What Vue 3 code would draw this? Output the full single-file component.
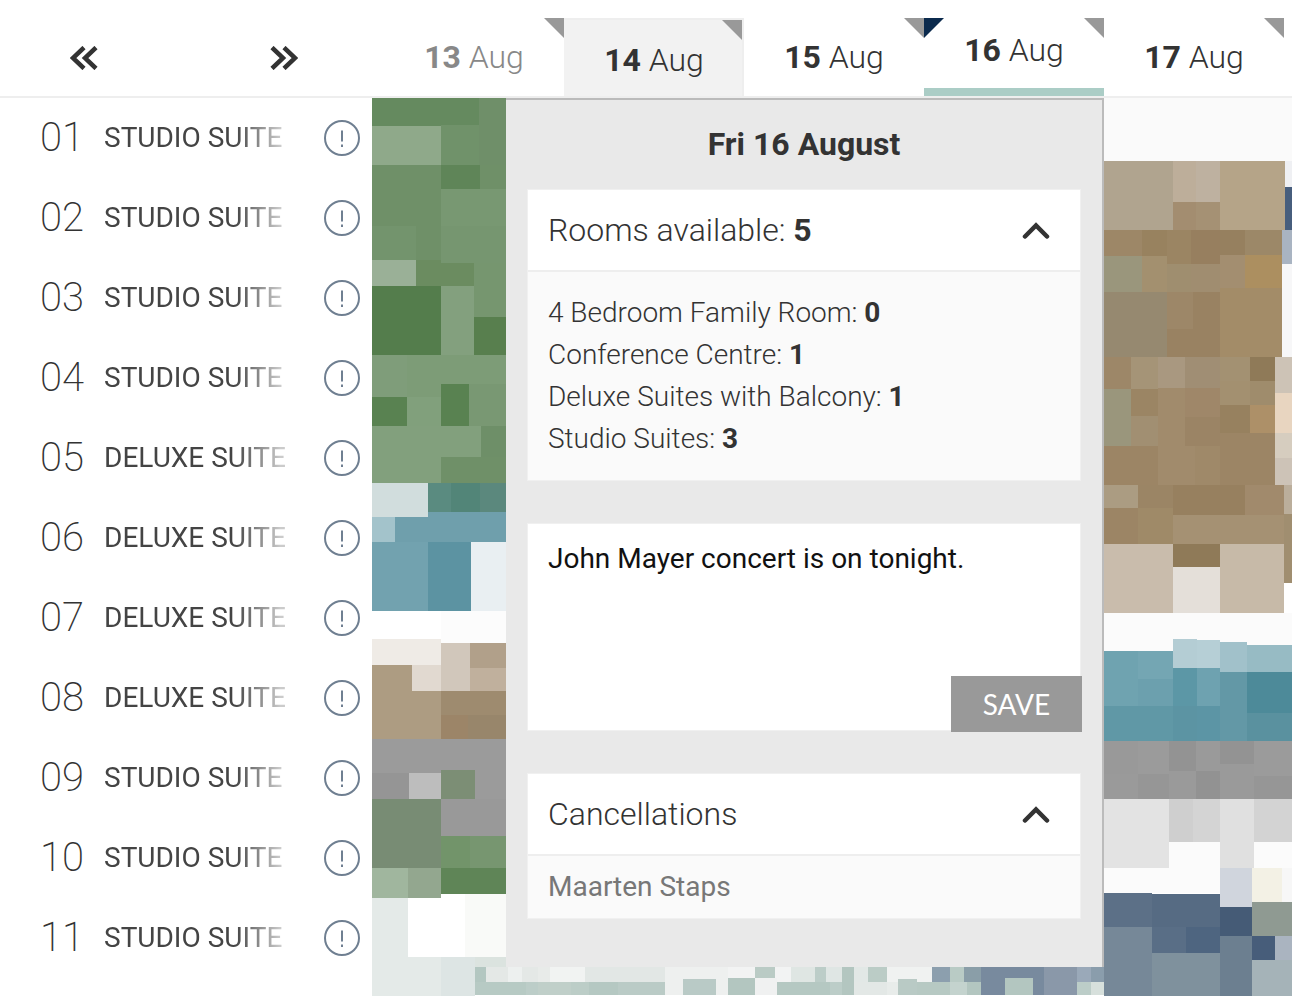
<script setup>
const days = [
  { num: 13, cls: 'past' },
  { num: 14, cls: 'today' },
  { num: 15, cls: '' },
  { num: 16, cls: 'active' },
  { num: 17, cls: '' }
]

const rooms = [
  ['01', 'STUDIO SUITE'], ['02', 'STUDIO SUITE'], ['03', 'STUDIO SUITE'], ['04', 'STUDIO SUITE'],
  ['05', 'DELUXE SUITE'], ['06', 'DELUXE SUITE'], ['07', 'DELUXE SUITE'], ['08', 'DELUXE SUITE'],
  ['09', 'STUDIO SUITE'], ['10', 'STUDIO SUITE'], ['11', 'STUDIO SUITE']
]

const availability = [
  ['4 Bedroom Family Room', 0],
  ['Conference Centre', 1],
  ['Deluxe Suites with Balcony', 1],
  ['Studio Suites', 3]
]

// blurred booking blocks: [x1, y1, x2, y2, colour] in page pixels
const blocks = [
  // left column
  [372,98,479,126,'#658a5f'],[479,98,506,165,'#6f8f69'],[372,126,441,165,'#8fa98a'],[441,125,479,165,'#70926a'],
  [372,165,441,226,'#6f9068'],[441,165,480,189,'#5f8558'],[480,165,506,189,'#6f9068'],[441,189,506,226,'#789872'],
  [372,226,416,260,'#73946d'],[416,226,441,260,'#6f9068'],[441,226,506,263,'#769670'],[372,260,416,286,'#9ab097'],
  [416,260,441,286,'#6b8c60'],[441,263,474,286,'#6b8c60'],[474,263,506,317,'#76966f'],[372,286,441,355,'#547d4c'],
  [441,286,474,355,'#83a07e'],[474,317,506,355,'#587f4e'],[372,355,407,397,'#7f9d7a'],[407,355,506,384,'#7d9c77'],
  [407,384,441,397,'#7d9c77'],[441,384,469,426,'#598251'],[469,384,506,426,'#799873'],[372,397,407,426,'#598251'],
  [407,397,441,426,'#81a07c'],[372,426,481,457,'#82a07d'],[481,426,506,457,'#6e8f68'],[372,457,441,483,'#82a07d'],
  [441,457,506,483,'#6f9068'],[372,483,428,517,'#d1dddd'],[428,483,451,512,'#5a8b80'],[451,483,480,512,'#528578'],
  [480,483,506,512,'#5b887d'],[428,512,506,542,'#6f9fac'],[372,517,395,542,'#a3c3cb'],[395,517,428,542,'#6f9fac'],
  [372,542,428,611,'#72a2af'],[428,542,471,611,'#5c93a2'],[471,542,506,611,'#e9eff2'],[441,611,506,643,'#fcfcfc'],
  [372,639,441,665,'#efebe6'],[372,665,412,691,'#ad9c82'],[412,665,441,691,'#e1d9d0'],[441,643,470,691,'#d1c7bb'],
  [470,643,506,668,'#b1a08a'],[470,668,506,691,'#c0b09d'],[372,691,441,739,'#ad9c82'],[441,691,506,715,'#9e8b6f'],
  [441,715,468,739,'#9c8568'],[468,715,506,739,'#98866b'],[372,739,506,773,'#9b9b9b'],[372,773,409,799,'#959595'],
  [409,773,441,799,'#bdbdbd'],[441,770,475,799,'#7c8e75'],[475,770,506,799,'#9b9b9b'],[372,799,441,868,'#788c74'],
  [441,799,506,836,'#999999'],[441,836,470,868,'#72946a'],[470,836,506,868,'#779670'],[372,868,408,898,'#a0b69e'],
  [408,868,441,898,'#93a78f'],[441,868,506,894,'#5f8557'],[372,898,408,957,'#e4eae8'],[465,894,506,957,'#f9faf8'],
  [372,957,441,996,'#e4eae8'],[441,957,475,996,'#dde5e4'],[475,957,506,967,'#dbe3df'],
  // strip under the panel, top row
  [475,967,486,982,'#b3c7c1'],[486,967,508,982,'#e4e8e6'],[508,967,522,982,'#edf0ef'],[522,967,538,982,'#e4e8e6'],
  [538,967,550,982,'#e8ebe9'],[550,967,585,982,'#f1f3f2'],[585,967,665,982,'#e2e7e5'],[665,967,728,982,'#eef0ef'],
  [728,967,755,982,'#f2f3f3'],[755,967,775,982,'#bacbc5'],[775,967,791,982,'#f2f3f3'],[791,967,815,982,'#dfe6e3'],
  [815,967,826,982,'#bccdc8'],[826,967,842,982,'#dfe6e4'],[842,967,854,982,'#b3c6c0'],[854,967,868,982,'#e2e8e6'],
  [868,967,887,982,'#bbccc6'],[887,967,932,982,'#f0f2f1'],[932,967,950,982,'#8c9fae'],[950,967,964,982,'#b9cbc5'],
  [964,967,981,982,'#8a9ea8'],[981,967,1044,982,'#788a9e'],[1044,967,1077,982,'#8a98a9'],[1077,967,1091,982,'#9aa9b9'],
  [1091,967,1107,982,'#8a9dac'],
  // strip, bottom row
  [475,982,526,995,'#b7cac4'],[526,982,538,995,'#bccdc8'],[538,982,571,995,'#c0cfc9'],[571,982,589,995,'#bccdc7'],
  [589,982,618,995,'#b5c8c2'],[618,982,665,995,'#bacbc6'],[665,982,683,995,'#eef0ef'],[683,979,716,995,'#b9cac6'],
  [716,982,728,995,'#eef0ef'],[728,978,755,995,'#b3c6c0'],[755,978,777,995,'#f0f1f1'],[777,982,830,995,'#b5c8c2'],
  [830,982,842,995,'#bccdc8'],[842,982,854,995,'#b3c6c0'],[854,982,887,995,'#e3e8e6'],[887,982,898,995,'#e8ecea'],
  [898,979,917,995,'#b9cac5'],[917,982,950,995,'#b7c9c3'],[950,982,967,995,'#c4d3ce'],[967,982,981,995,'#b3c6c0'],
  [981,982,1005,995,'#788a9e'],[1005,978,1033,995,'#b3c6c0'],[1033,982,1044,995,'#788a9e'],[1044,982,1077,995,'#8a98a9'],
  [1077,982,1091,995,'#bccdc8'],[1091,982,1107,995,'#d7e0dc'],
  // right column
  [1104,98,1292,161,'#fafafa'],[1104,161,1173,230,'#b0a48f'],[1173,161,1196,202,'#bdae9a'],[1196,161,1220,202,'#beb1a0'],
  [1173,202,1196,230,'#a38d70'],[1196,202,1220,230,'#a59174'],[1220,161,1285,230,'#b5a488'],[1285,161,1292,187,'#eff0f3'],
  [1285,187,1292,230,'#475e7d'],[1104,230,1142,256,'#9d8767'],[1142,230,1167,256,'#98825f'],[1167,230,1191,264,'#9b8563'],
  [1191,230,1220,264,'#977f5f'],[1220,230,1245,255,'#96805f'],[1245,230,1282,255,'#9c8868'],[1282,230,1292,264,'#a9b4c2'],
  [1104,256,1142,292,'#9a967c'],[1142,256,1167,292,'#a3906f'],[1167,264,1191,292,'#9f8e6f'],[1191,264,1220,292,'#a08d70'],
  [1220,255,1245,288,'#a38e70'],[1245,255,1282,288,'#ac8f60'],[1282,264,1292,357,'#f7f7f8'],[1104,292,1167,357,'#968970'],
  [1167,292,1193,329,'#9d8768'],[1193,292,1220,329,'#998262'],[1167,329,1220,357,'#998262'],[1220,288,1282,357,'#a38c68'],
  [1104,357,1131,389,'#9d8768'],[1131,357,1158,389,'#a59477'],[1158,357,1185,388,'#a99880'],[1185,357,1220,388,'#a08e74'],
  [1220,357,1250,381,'#a39172'],[1250,357,1275,381,'#8f7a58'],[1275,357,1292,393,'#cdc3b6'],[1104,389,1131,446,'#9a967c'],
  [1131,389,1158,416,'#9b8564'],[1131,416,1158,446,'#a18f72'],[1158,388,1185,446,'#a18b6c'],[1185,388,1220,417,'#9f8769'],
  [1185,417,1220,446,'#9b8465'],[1220,381,1250,405,'#a39070'],[1250,381,1275,405,'#9f8c6c'],[1220,405,1250,433,'#97815f'],
  [1250,405,1275,433,'#ad9068'],[1275,393,1292,433,'#e8d5c0'],[1275,433,1292,458,'#d6cdbf'],[1275,458,1292,485,'#cdc3b7'],
  [1104,446,1158,485,'#9c8565'],[1158,446,1195,485,'#a18b6c'],[1195,446,1220,485,'#9f8969'],[1220,433,1275,485,'#9c8565'],
  [1104,485,1138,508,'#ab9c82'],[1138,485,1173,508,'#9b8565'],[1173,485,1245,515,'#97805f'],[1245,485,1284,516,'#a18a6c'],
  [1284,485,1292,514,'#bbae9b'],[1104,508,1138,544,'#9c8565'],[1138,508,1173,544,'#9f8a68'],[1173,515,1284,544,'#a59173'],
  [1284,514,1292,583,'#a08e70'],[1104,544,1173,613,'#c9bcac'],[1173,544,1220,567,'#8f7a58'],[1173,567,1220,613,'#e4dfd9'],
  [1220,544,1284,613,'#c7baa8'],[1104,613,1292,651,'#fbfbfb'],
  [1104,651,1138,706,'#6fa3b0'],[1138,651,1173,679,'#74a6b3'],[1138,679,1173,706,'#6ca0ae'],[1173,639,1197,668,'#b4cdd4'],
  [1197,640,1220,668,'#b6cfd6'],[1220,642,1247,672,'#a1c1ca'],[1247,645,1292,672,'#97bbc4'],[1173,668,1197,706,'#5c97a6'],
  [1197,668,1220,706,'#6ea2b0'],[1220,672,1247,741,'#6398a6'],[1247,672,1292,713,'#4d8a99'],[1247,713,1292,741,'#5a919f'],
  [1104,706,1173,741,'#6098a6'],[1173,706,1197,741,'#5c94a3'],[1197,706,1220,741,'#5c95a5'],
  [1104,741,1138,774,'#999999'],[1138,741,1169,774,'#9b9b9b'],[1169,741,1196,771,'#939393'],[1196,741,1220,771,'#9a9a9a'],
  [1220,741,1254,764,'#939393'],[1254,741,1292,776,'#9b9b9b'],[1220,764,1254,799,'#9a9a9a'],[1254,776,1292,799,'#969696'],
  [1169,771,1196,799,'#9a9a9a'],[1196,771,1220,799,'#929292'],[1104,774,1138,799,'#9a9a9a'],[1138,774,1169,799,'#969696'],
  [1104,799,1169,868,'#e3e3e3'],[1169,799,1193,842,'#cfcfcf'],[1193,799,1220,842,'#d4d4d4'],[1220,799,1254,868,'#e0e0e0'],
  [1254,799,1292,842,'#d3d3d3'],[1169,842,1220,868,'#fbfbfb'],[1254,842,1292,868,'#fbfbfb'],[1104,868,1220,893,'#fbfbfb'],
  [1220,868,1252,907,'#d0d5dd'],[1252,868,1282,902,'#f3f1e5'],[1282,868,1292,902,'#f7f7f7'],[1104,893,1152,927,'#5c7087'],
  [1152,894,1220,927,'#566b83'],[1220,907,1252,936,'#455b76'],[1252,902,1292,936,'#8f9a92'],[1104,927,1152,996,'#768898'],
  [1152,927,1186,953,'#596e86'],[1186,927,1220,953,'#4e6580'],[1152,953,1220,996,'#7f919d'],[1220,936,1252,996,'#6c7f90'],
  [1252,936,1275,960,'#475d7a'],[1275,936,1292,960,'#aab4c0'],[1252,960,1292,996,'#a5b3b8']
]
</script>

<template>
  <div class="page">
    <header class="topbar">
      <div class="pager">
        <svg class="pager-icon" viewBox="0 0 28 24"><path d="M14 1.5 3 12l11 10.5M26 1.5 15 12l11 10.5" /></svg>
        <svg class="pager-icon" viewBox="0 0 28 24"><path d="M2 1.5 13 12 2 22.5M14 1.5 25 12 14 22.5" /></svg>
      </div>
      <div v-for="day in days" :key="day.num" class="day" :class="day.cls">
        <span v-if="day.cls === 'active'" class="flag"></span>
        <span class="corner"></span>
        <span><b>{{ day.num }}</b> Aug</span>
      </div>
    </header>

    <div class="board">
      <ul class="rooms">
        <li v-for="room in rooms" :key="room[0]" class="room">
          <span class="room-no">{{ room[0] }}</span>
          <span class="room-type">{{ room[1] }}</span>
          <svg class="alert" viewBox="0 0 36 36">
            <circle cx="18" cy="18" r="17" />
            <path d="M18 10.5v11M18 24.5v2.5" />
          </svg>
        </li>
      </ul>

      <div class="timeline">
        <svg class="blocks" viewBox="372 98 920 898" shape-rendering="crispEdges">
          <rect
            v-for="(b, i) in blocks"
            :key="i"
            :x="b[0]"
            :y="b[1]"
            :width="b[2] - b[0]"
            :height="b[3] - b[1]"
            :fill="b[4]"
          />
        </svg>

        <aside class="panel">
          <h2>Fri 16 August</h2>

          <section class="card">
            <div class="card-head">
              <span>Rooms available: <b>5</b></span>
              <svg class="chevron" viewBox="0 0 28 17"><path d="M3 14.5 14 3.5 25 14.5" /></svg>
            </div>
            <div class="card-body">
              <p v-for="item in availability" :key="item[0]">{{ item[0] }}: <b>{{ item[1] }}</b></p>
            </div>
          </section>

          <section class="card note">
            <p>John Mayer concert is on tonight.</p>
            <button type="button" class="save">SAVE</button>
          </section>

          <section class="card">
            <div class="card-head">
              <span>Cancellations</span>
              <svg class="chevron" viewBox="0 0 28 17"><path d="M3 14.5 14 3.5 25 14.5" /></svg>
            </div>
            <div class="card-body cancelled">
              <p>Maarten Staps</p>
            </div>
          </section>
        </aside>
      </div>
    </div>
  </div>
</template>

<style scoped>
.page {
  width: 1292px;
  height: 996px;
  overflow: hidden;
  background: #fff;
  color: #333;
  font-family: Roboto, "Liberation Sans", sans-serif;
}

.topbar {
  display: flex;
  height: 98px;
  box-sizing: border-box;
  border-bottom: 2px solid #eee;
}

.pager {
  width: 384px;
  box-sizing: border-box;
  display: flex;
  align-items: center;
  gap: 172px;
  padding: 20px 0 0 70px;
}

.pager-icon {
  width: 28px;
  height: 24px;
  flex: none;
}

.pager-icon path {
  fill: none;
  stroke: #333;
  stroke-width: 4.5;
}

.day {
  position: relative;
  width: 180px;
  height: 78px;
  margin-top: 18px;
  box-sizing: border-box;
  display: flex;
  align-items: center;
  justify-content: center;
  font-size: 32px;
  font-weight: 300;
}

.day b {
  font-weight: 700;
}

.corner {
  position: absolute;
  top: 0;
  right: 0;
  border-top: 20px solid #999;
  border-left: 20px solid transparent;
}

.flag {
  position: absolute;
  top: 0;
  left: 0;
  border-top: 20px solid #0b2a4d;
  border-right: 20px solid transparent;
}

.past {
  color: #888;
}

.today {
  background: #f2f2f2;
  border: solid #eee;
  border-width: 2px 2px 0 0;
  padding: 4px 0 0 2px;
}

.active {
  border-bottom: 8px solid #abcdc6;
  padding-bottom: 6px;
}

.board {
  display: flex;
  height: 898px;
}

.rooms {
  width: 372px;
  flex: none;
  margin: 0;
  padding: 0;
  list-style: none;
}

.room {
  height: 80px;
  box-sizing: border-box;
  display: flex;
  align-items: center;
  padding-left: 40px;
}

.room-no {
  width: 64px;
  margin-bottom: 2px;
  font-size: 40px;
  font-weight: 200;
  color: #333;
}

.room-type {
  width: 182px;
  margin-bottom: 2px;
  font-size: 28px;
  white-space: nowrap;
  color: #444;
  -webkit-mask-image: linear-gradient(to right, #000 72%, rgba(0, 0, 0, 0.28) 97%);
  mask-image: linear-gradient(to right, #000 72%, rgba(0, 0, 0, 0.28) 97%);
}

.alert {
  width: 36px;
  height: 36px;
  margin-left: 38px;
  flex: none;
}

.alert circle {
  fill: none;
  stroke: #6f7f91;
  stroke-width: 2;
}

.alert path {
  fill: none;
  stroke: #6f7f91;
  stroke-width: 2;
}

.timeline {
  position: relative;
  flex: 1;
}

.blocks {
  display: block;
  width: 920px;
  height: 898px;
}

.panel {
  position: absolute;
  top: 0;
  left: 134px;
  width: 598px;
  height: 869px;
  box-sizing: border-box;
  background: #e9e9e9;
  border-top: 2px solid #bbb;
  border-right: 2px solid #bbb;
  padding: 0 22px;
}

.panel h2 {
  margin: 0;
  height: 90px;
  line-height: 88px;
  text-align: center;
  font-size: 32px;
  font-weight: 700;
}

.card {
  position: relative;
  background: #fff;
  box-shadow: 0 0 0 1px #f0f0f0;
  margin-bottom: 44px;
}

.card-head {
  height: 82px;
  box-sizing: border-box;
  display: flex;
  align-items: center;
  justify-content: space-between;
  padding: 0 30px 0 20px;
  font-size: 32px;
  font-weight: 300;
  border-bottom: 2px solid #eee;
}

.card-head b {
  font-weight: 700;
}

.chevron {
  width: 28px;
  height: 17px;
}

.chevron path {
  fill: none;
  stroke: #333;
  stroke-width: 4.5;
  stroke-linecap: round;
}

.card-body {
  background: #fafafa;
  padding: 20px;
  font-size: 28px;
  font-weight: 300;
  line-height: 42px;
}

.card-body p {
  margin: 0;
}

.card-body b {
  font-weight: 700;
}

.cancelled {
  padding: 10px 20px;
  color: #777;
  font-weight: 400;
}

.note {
  height: 206px;
  box-sizing: border-box;
  padding: 14px 20px;
  font-size: 28px;
  line-height: 42px;
  color: #111;
}

.note p {
  margin: 0;
}

.save {
  position: absolute;
  right: -2px;
  bottom: -2px;
  width: 131px;
  height: 56px;
  border: none;
  background: #999;
  color: #fff;
  font-family: Lato, sans-serif;
  font-size: 28px;
}
</style>
